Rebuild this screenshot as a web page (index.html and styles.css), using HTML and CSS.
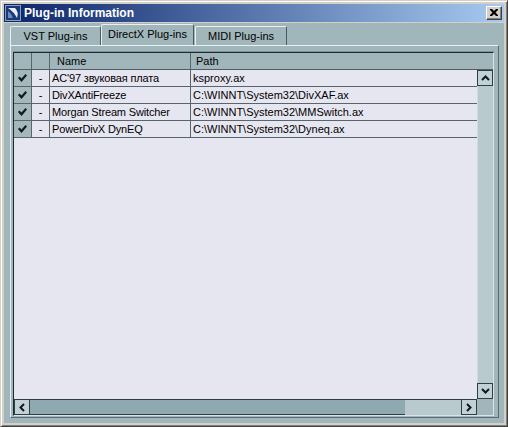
FILE: index.html
```html
<!DOCTYPE html>
<html>
<head>
<meta charset="utf-8">
<link rel="stylesheet" href="styles.css">
</head>
<body>
<div class="win">
  <div class="titlebar">
    <svg class="appicon" width="16" height="16" viewBox="0 0 16 16">
      <rect x="0" y="0" width="16" height="16" fill="#8aa0b8"/>
      <rect x="1" y="1" width="14" height="14" fill="#1a3a78"/>
      <path d="M3 3 L10 3 Q14 7 12 13 Q9 7 3 3 Z" fill="#e8eef8"/>
      <path d="M3 6 Q7 9 8 13 L3 13 Z" fill="#6f8cb8"/>
    </svg>
    <span class="title">Plug-in Information</span>
    <div class="close">
      <svg width="8" height="7" viewBox="0 0 8 7"><path d="M0 0h2l2 2 2-2h2v1l-2.5 2.5L8 6v1H6L4 5 2 7H0V6l2.5-2.5L0 1z" fill="#000"/></svg>
    </div>
  </div>
  <div class="body">
    <div class="tabs">
      <div class="tab">VST Plug-ins</div>
      <div class="tab active">DirectX Plug-ins</div>
      <div class="tab">MIDI Plug-ins</div>
    </div>
    <div class="panel">
      <div class="frame">
        <div class="header">
          <div class="c chk"></div>
          <div class="c dsh"></div>
          <div class="c name">Name</div>
          <div class="c path">Path</div>
        </div>
        <div class="mid">
          <div class="list">
            <div class="row"><div class="c chk"><svg width="9" height="8" viewBox="0 0 9 8"><path d="M0 4l1.5-1.5 2 2L7.5 0 9 1.5 3.5 8z" fill="#101820"/></svg></div><div class="c dsh">-</div><div class="c name">AC'97 звуковая плата</div><div class="c path">ksproxy.ax</div></div>
            <div class="row"><div class="c chk"><svg width="9" height="8" viewBox="0 0 9 8"><path d="M0 4l1.5-1.5 2 2L7.5 0 9 1.5 3.5 8z" fill="#101820"/></svg></div><div class="c dsh">-</div><div class="c name">DivXAntiFreeze</div><div class="c path">C:\WINNT\System32\DivXAF.ax</div></div>
            <div class="row"><div class="c chk"><svg width="9" height="8" viewBox="0 0 9 8"><path d="M0 4l1.5-1.5 2 2L7.5 0 9 1.5 3.5 8z" fill="#101820"/></svg></div><div class="c dsh">-</div><div class="c name">Morgan Stream Switcher</div><div class="c path">C:\WINNT\System32\MMSwitch.ax</div></div>
            <div class="row"><div class="c chk"><svg width="9" height="8" viewBox="0 0 9 8"><path d="M0 4l1.5-1.5 2 2L7.5 0 9 1.5 3.5 8z" fill="#101820"/></svg></div><div class="c dsh">-</div><div class="c name">PowerDivX DynEQ</div><div class="c path">C:\WINNT\System32\Dyneq.ax</div></div>
          </div>
          <div class="vscroll">
            <div class="sbtn"><svg width="9" height="6" viewBox="0 0 9 6"><path d="M1 5 L4.5 1.5 L8 5" fill="none" stroke="#101820" stroke-width="2"/></svg></div>
            <div class="vtrack"></div>
            <div class="sbtn"><svg width="9" height="6" viewBox="0 0 9 6"><path d="M1 1 L4.5 4.5 L8 1" fill="none" stroke="#101820" stroke-width="2"/></svg></div>
          </div>
        </div>
        <div class="bottom">
          <div class="hscroll">
            <div class="sbtn"><svg width="6" height="9" viewBox="0 0 6 9"><path d="M5 1 L1.5 4.5 L5 8" fill="none" stroke="#101820" stroke-width="2"/></svg></div>
            <div class="hthumb"></div>
            <div class="htrack"></div>
            <div class="sbtn"><svg width="6" height="9" viewBox="0 0 6 9"><path d="M1 1 L4.5 4.5 L1 8" fill="none" stroke="#101820" stroke-width="2"/></svg></div>
          </div>
          <div class="corner"></div>
        </div>
      </div>
    </div>
  </div>
</div>
</body>
</html>
```

FILE: styles.css
```css
* { box-sizing: border-box; }
html, body { margin: 0; padding: 0; background: #d4d0c8; }
body { font-family: "Liberation Sans", Arial, sans-serif; font-size: 11px; color: #000; }

.win {
  width: 508px; height: 427px;
  background: #d4d0c8;
  border-top: 1px solid #d4d0c8; border-left: 1px solid #d4d0c8;
  border-right: 1px solid #404040; border-bottom: 1px solid #404040;
  box-shadow: inset 1px 1px 0 #fff, inset -1px -1px 0 #808080;
  padding: 3px;
  display: flex; flex-direction: column;
}

.titlebar {
  height: 18px;
  background: linear-gradient(to right, #0a246a, #a6caf0);
  display: flex; align-items: center;
  padding: 0 2px 0 1px;
}
.appicon { flex: none; }
.title {
  color: #fff; font-weight: bold; font-size: 12px;
  margin-left: 3px; flex: 1;
  font-family: "Liberation Sans", Arial, sans-serif;
}
.close {
  width: 16px; height: 14px;
  background: #d4d0c8;
  border-top: 1px solid #fff; border-left: 1px solid #fff;
  border-right: 1px solid #404040; border-bottom: 1px solid #404040;
  box-shadow: inset -1px -1px 0 #808080;
  display: flex; align-items: center; justify-content: center;
  padding-bottom: 1px; padding-right: 1px;
}

.body {
  flex: 1;
  margin-top: 1px;
  background: #a0b6ba;
  display: flex; flex-direction: column;
  padding: 1px 5px 5px 6px;
}

.tabs { display: flex; height: 21px; align-items: flex-end; }
.tab {
  height: 19px;
  border-top: 1px solid #e8f0f0; border-left: 1px solid #e8f0f0;
  border-right: 1px solid #4a5a60;
  border-radius: 2px 2px 0 0;
  display: flex; align-items: center; justify-content: center;
  font-size: 11px; white-space: nowrap;
}
.tab:nth-child(1) { width: 91px; }
.tab:nth-child(2) { width: 93px; }
.tab:nth-child(3) { width: 92px; margin-left: 1px; }
.tab.active { height: 21px; padding-bottom: 2px; }

.panel {
  flex: 1;
  border-top: 1px solid #e8f0f0; border-left: 1px solid #e8f0f0;
  border-right: 1px solid #5a6a70; border-bottom: 1px solid #5a6a70;
  padding: 6px 4px 1px 2px;
  display: flex;
}
.frame {
  flex: 1;
  border-top: 1px solid #1e2c32; border-left: 1px solid #1e2c32;
  border-right: 1px solid #d8e4e6; border-bottom: 1px solid #d8e4e6;
  box-shadow: 0 -1px 0 #7d9296;
  display: flex; flex-direction: column;
}

.header { display: flex; height: 17px; background: #a0b6ba; border-bottom: 1px solid #4e5e64; }
.row { display: flex; height: 17px; border-bottom: 1px solid #56666c; }
.c { height: 100%; display: flex; align-items: center; border-right: 1px solid #56666c; white-space: nowrap; overflow: hidden; }
.chk { width: 18px; justify-content: center; }
.dsh { width: 18px; justify-content: center; }
.name { width: 141px; padding-left: 2px; letter-spacing: -0.15px; }
.path { flex: 1; padding-left: 2px; border-right: none; }
.header .name { padding-left: 7px; letter-spacing: 0; }
.header .path { padding-left: 5px; }
.row .chk { background: #a4b8bc; }

.mid { flex: 1; display: flex; min-height: 0; }
.list { flex: 1; background: #e6e6f0; }
.vscroll { width: 16px; display: flex; flex-direction: column; background: #b9cace; }
.sbtn {
  width: 16px; height: 16px; flex: none;
  background: #c2d1d5;
  border: 1px solid #2e3e44;
  display: flex; align-items: center; justify-content: center;
}
.vtrack { flex: 1; border-left: 1px solid #cfdcdf; }

.bottom { height: 16px; display: flex; }
.hscroll { flex: 1; display: flex; background: #b9cace; }
.hthumb { width: 375px; background: #8eaab0; border-top: 1px solid #2e3e44; border-bottom: 1px solid #2e3e44; }
.htrack { flex: 1; border-top: 1px solid #2e3e44; }
.corner { width: 16px; background: #a0b6ba; }
```
